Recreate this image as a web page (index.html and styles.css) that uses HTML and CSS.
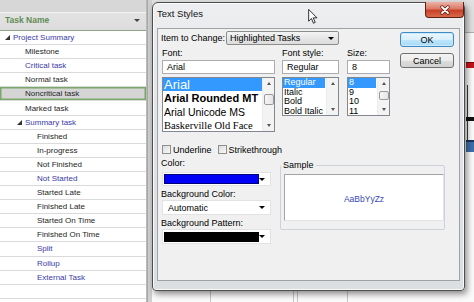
FILE: index.html
```html
<!DOCTYPE html>
<html lang="en">
<head>
<meta charset="utf-8">
<title>Text Styles</title>
<link rel="stylesheet" href="styles.css">
</head>
<body>
<div class="screen">
  <div class="table">
    <div class="th"><span class="th-name">Task Name</span><span class="th-arrow"></span></div>
    <div class="row lvl0 blue"><svg class="tri" viewBox="0 0 5 5"><polygon points="5,0 5,5 0,5"/></svg>Project Summary</div>
    <div class="row lvl1">Milestone</div>
    <div class="row lvl1 blue">Critical task</div>
    <div class="row lvl1">Normal task</div>
    <div class="row lvl1 sel">Noncritical task</div>
    <div class="row lvl1">Marked task</div>
    <div class="row lvl1t blue"><svg class="tri" viewBox="0 0 5 5"><polygon points="5,0 5,5 0,5"/></svg>Summary task</div>
    <div class="row lvl2">Finished</div>
    <div class="row lvl2">In-progress</div>
    <div class="row lvl2">Not Finished</div>
    <div class="row lvl2 blue">Not Started</div>
    <div class="row lvl2">Started Late</div>
    <div class="row lvl2">Finished Late</div>
    <div class="row lvl2">Started On Time</div>
    <div class="row lvl2">Finished On Time</div>
    <div class="row lvl2 blue">Split</div>
    <div class="row lvl2 blue">Rollup</div>
    <div class="row lvl2 blue">External Task</div>
    <div class="row"></div>
    <div class="row"></div>
  </div>
  <div class="split"></div>
  <div class="gantt">
    <div class="g-head"></div>
    <div class="g-bar g-red"></div>
    <div class="g-link"></div>
    <div class="g-bar g-black"></div>
    <div class="g-bar g-blue"></div>
    <div class="g-grid" style="left:58px"></div>
    <div class="g-grid" style="left:141px"></div>
    <div class="g-grid" style="left:145px"></div>
    <div class="g-grid" style="left:195px"></div>
  </div>

  <div class="dialog">
    <div class="titlebar">
      <span class="title">Text Styles</span>
      <div class="close">
        <svg viewBox="0 0 12 10" width="12" height="10"><path d="M3 2 L9 8 M9 2 L3 8" stroke="#5a1a10" stroke-width="3.2" stroke-linecap="round"/><path d="M3 2 L9 8 M9 2 L3 8" stroke="#fff" stroke-width="1.8" stroke-linecap="round"/></svg>
      </div>
    </div>
    <div class="panel">
      <div class="main">
        <div class="item-row">
          <span class="lbl item-lbl">Item to Change:</span>
          <div class="dd">Highlighted Tasks<i class="arr"></i></div>
        </div>
        <div class="font-row">
          <div class="fcol c-font">
            <span class="lbl">Font:</span>
            <div class="tb">Arial</div>
            <div class="list l-font">
              <div class="items">
                <div class="it f1 hl">Arial</div>
                <div class="it f2">Arial Rounded MT</div>
                <div class="it f3">Arial Unicode MS</div>
                <div class="it f4">Baskerville Old Face</div>
              </div>
              <div class="sb">
                <div class="sa up"></div>
                <div class="thumb t-font"></div>
                <div class="sp"></div>
                <div class="sa dn"></div>
              </div>
            </div>
          </div>
          <div class="fcol c-style">
            <span class="lbl">Font style:</span>
            <div class="tb">Regular</div>
            <div class="list l-small">
              <div class="items">
                <div class="it s hl">Regular</div>
                <div class="it s">Italic</div>
                <div class="it s">Bold</div>
                <div class="it s">Bold Italic</div>
              </div>
              <div class="sb">
                <div class="sa up"></div>
                <div class="sp"></div>
                <div class="sa dn"></div>
              </div>
            </div>
          </div>
          <div class="fcol c-size">
            <span class="lbl">Size:</span>
            <div class="tb">8</div>
            <div class="list l-small">
              <div class="items">
                <div class="it s hl">8</div>
                <div class="it s">9</div>
                <div class="it s">10</div>
                <div class="it s">11</div>
              </div>
              <div class="sb">
                <div class="sa up"></div>
                <div class="thumb t-size"></div>
                <div class="sp"></div>
                <div class="sa dn"></div>
              </div>
            </div>
          </div>
        </div>
        <div class="checks">
          <span class="cb"></span><span class="cb-lbl">Underline</span>
          <span class="cb cb2"></span><span class="cb-lbl">Strikethrough</span>
        </div>
        <div class="bottom">
          <div class="bcol">
            <span class="lbl">Color:</span>
            <div class="cdd c1"><span class="sw sw-blue"></span><i class="arr"></i></div>
            <span class="lbl l2">Background Color:</span>
            <div class="cdd c2"><span class="cdd-txt">Automatic</span><i class="arr"></i></div>
            <span class="lbl l2">Background Pattern:</span>
            <div class="cdd c2"><span class="sw sw-black"></span><i class="arr"></i></div>
          </div>
          <fieldset class="sample">
            <legend>Sample</legend>
            <div class="sample-box">AaBbYyZz</div>
          </fieldset>
        </div>
      </div>
      <div class="btns">
        <div class="btn ok">OK</div>
        <div class="btn">Cancel</div>
      </div>
    </div>
  </div>

  <svg class="cursor" viewBox="0 0 12 19" width="10" height="15"><path d="M0.5 0.5 L0.5 15.5 L4 12 L6.5 18 L8.8 17 L6.3 11.2 L11 11.2 Z" fill="#fff" stroke="#000" stroke-width="1"/></svg>
</div>
</body>
</html>
```

FILE: styles.css
```css
* { box-sizing: border-box; }
html, body { margin: 0; padding: 0; }
body { width: 474px; height: 302px; overflow: hidden; background: #fff; font-family: "Liberation Sans", Arial, sans-serif; }

.screen { position: relative; width: 474px; height: 302px; display: flex; overflow: hidden; }

/* task table */
.table { width: 147px; flex: none; border-right: 1px solid #b9b9b9; background: #fff; }
.th { height: 31px; display: flex; align-items: flex-end; justify-content: space-between; padding: 0 6px 5px 5px;
  background: linear-gradient(#d7d7d7 0, #d7d7d7 12px, #f2f2f2 12px, #f2f2f2 13px, #e3e3e3 13px, #dcdcdc 30px);
  border-bottom: 1px solid #8fa68a; }
.th-name { font-size: 8.5px; font-weight: bold; color: #5f8c54; line-height: 10px; }
.th-arrow { width: 0; height: 0; border-left: 3px solid transparent; border-right: 3px solid transparent; border-top: 3px solid #444; margin-bottom: 3px; }
.row { height: 14.1px; border-bottom: 1px solid #dadada; display: flex; align-items: center; font-size: 8px; color: #1e1e1e; white-space: nowrap; }
.row.blue { color: #3a3aa6; }
.lvl0 { padding-left: 5px; }
.lvl1 { padding-left: 25px; }
.lvl1t { padding-left: 17px; }
.lvl2 { padding-left: 37px; }
.tri { width: 5px; height: 5px; margin-right: 3px; fill: #333; flex: none; }
.row.sel { background: #d5d5d5; box-shadow: inset 0 0 0 1.5px #7aa86b; }

.split { width: 5px; flex: none; background: #cfcfcf; border-left: 1px solid #a9a9a9; }

/* gantt (behind dialog) */
.gantt { flex: 1; position: relative; background: #fafafa; }
.g-head { height: 33px; background: #e0e0e0; border-bottom: 1px solid #b0b0b0; }
.g-bar { position: absolute; left: 314px; width: 10px; }
.g-red { top: 62px; height: 6px; background: #c8121b; border-top: 1px solid #7a0a0a; }
.g-black { top: 117px; height: 4px; background: #111; }
.g-blue { top: 140px; height: 12px; background: #3c6ea8; border-top: 2px solid #1a3558; }
.g-link { position: absolute; left: 315px; top: 85px; width: 1px; height: 58px; background: #3a3a3a; }
.g-grid { position: absolute; top: 240px; bottom: 0; width: 1px; background: #c6c6c6; }

/* dialog window */
.dialog { position: absolute; left: 152px; top: 2px; width: 313px; height: 289px;
  border: 1px solid #4e4e4e; border-radius: 6px 6px 4px 4px;
  background: linear-gradient(#eceef0, #e1e3e6 40%, #dcdfe2);
  padding: 0 4px 9px 4px; display: flex; flex-direction: column;
  box-shadow: 2px 3px 6px rgba(0,0,0,0.45), inset 0 0 0 1px rgba(255,255,255,0.8); }
.titlebar { height: 25px; flex: none; display: flex; align-items: flex-start; justify-content: space-between; }
.title { font-size: 9.5px; line-height: 12px; padding-top: 5px; color: #111; }
.close { width: 39px; height: 16px; margin-top: -1px; margin-right: -4px; border: 1px solid #5f1f14; border-top: none;
  border-radius: 0 0 4px 4px; display: flex; align-items: center; justify-content: center;
  background: linear-gradient(#eab3a6 0, #dc7a66 45%, #c8402a 55%, #d86a48 100%); }

.panel { flex: 1; border: 1px solid #9ea3a8; background: #f0f0f0; display: flex; font-size: 9px; color: #000; }
.main { width: 242px; flex: none; padding-left: 3px; display: flex; flex-direction: column; }
.lbl { display: block; font-size: 9px; line-height: 10px; height: 10px; white-space: nowrap; }

.item-row { margin-top: 2px; height: 14px; display: flex; align-items: center; }
.item-lbl { width: 65px; flex: none; }
.dd { width: 113px; height: 14px; border: 1px solid #8c8c8c; border-radius: 2px; background: linear-gradient(#f4f4f4, #e6e6e6 50%, #dcdcdc);
  display: flex; align-items: center; justify-content: space-between; padding: 0 4px 0 3px; font-size: 9px; }
.arr { display: block; width: 0; height: 0; border-left: 3px solid transparent; border-right: 3px solid transparent; border-top: 3px solid #000; }

.font-row { margin-top: 3px; display: flex; align-items: flex-start; }
.fcol { display: flex; flex-direction: column; }
.c-font { width: 113px; margin-left: 1px; }
.c-style { width: 57px; margin-left: 7px; }
.c-size { width: 43px; margin-left: 8px; }
.tb { margin-top: 2px; height: 14px; border: 1px solid #abadb3; background: #fff; font-size: 9px; line-height: 12px; padding-left: 4px; }
.list { margin-top: 3px; border: 1px solid #828790; background: #fff; display: flex; overflow: hidden; }
.l-font { height: 55px; }
.l-small { height: 39px; }
.items { flex: 1; overflow: hidden; }
.it { white-space: nowrap; padding-left: 1px; color: #000; }
.it.hl { background: #3399ff; color: #fff; }
.f1 { height: 13px; font-size: 13px; line-height: 13px; }
.f2 { height: 14px; font-size: 11px; line-height: 14px; font-weight: bold; }
.f3 { height: 14px; font-size: 10.5px; line-height: 14px; }
.f4 { height: 14px; font-size: 10.5px; line-height: 14px; font-family: "Liberation Serif", serif; }
.it.s { height: 9.6px; font-size: 9px; line-height: 9.6px; }
.l-small .items .hl { margin-right: 1px; }
.sb { width: 12px; flex: none; background: #f3f3f3; border-left: 1px solid #ececec; display: flex; flex-direction: column; align-items: center; }
.sa { height: 11px; width: 12px; flex: none; display: flex; align-items: center; justify-content: center; }
.sa::after { content: ""; width: 0; height: 0; border-left: 2.5px solid transparent; border-right: 2.5px solid transparent; }
.sa.up::after { border-bottom: 3px solid #555; }
.sa.dn::after { border-top: 3px solid #555; }
.sp { flex: 1; }
.thumb { width: 10px; flex: none; border: 1px solid #9a9a9a; border-radius: 2px; background: linear-gradient(90deg, #f6f6f6, #e4e4e4); }
.t-font { margin-top: 5px; height: 11px; }
.t-size { margin-top: 2px; height: 9px; }

.checks { margin-top: 13px; height: 9px; display: flex; align-items: center; padding-left: 1px; }
.cb { width: 9px; height: 9px; flex: none; border: 1px solid #8e8f8f; background: linear-gradient(135deg, #dcdcdc, #f8f8f8); }
.cb-lbl { margin-left: 2px; font-size: 9px; line-height: 10px; }
.cb2 { margin-left: 6px; }

.bottom { margin-top: 4px; display: flex; align-items: flex-start; }
.bcol { width: 113px; margin-left: 1px; display: flex; flex-direction: column; }
.bcol .lbl { margin-left: -1px; }
.l2 { margin-top: 3px; }
.cdd { margin-top: 1px; height: 15px; background: #fff; border: 1px solid #e2e2e2; display: flex; align-items: center; justify-content: space-between; padding: 0 5px 0 1px; }
.c1 { margin-top: 4px; height: 14px; }
.sw { width: 95px; height: 10px; }
.sw-blue { background: #0000f6; border: 1px solid #00007a; }
.sw-black { background: #000; }
.cdd-txt { font-size: 9px; padding-left: 4px; }

.sample { margin: 2px 0 0 9px; padding: 0 0 8px 0; width: 173px; border: 1px solid #ccd3d8; border-radius: 2px; }
.sample legend { padding: 0 2px; font-size: 9px; line-height: 10px; height: 10px; }
.sample-box { margin: 4px 0 0 3px; width: 160px; height: 47px; background: #fff;
  border: 1px solid; border-color: #a3a3a3 #e4e4e4 #e4e4e4 #a3a3a3;
  display: flex; align-items: center; justify-content: center; padding-top: 3px;
  font-size: 8.5px; color: #3848b4; }

.btns { margin-top: 3px; margin-left: 0; display: flex; flex-direction: column; gap: 6px; }
.btn { width: 54px; height: 15px; border: 1px solid #707070; border-radius: 3px; font-size: 9px;
  display: flex; align-items: center; justify-content: center;
  background: linear-gradient(#f4f4f4 0, #ececec 50%, #dddddd 51%, #d2d2d2 100%); }
.btn.ok { border-color: #3c8bc4; background: linear-gradient(#eaf6fd 0, #d9f0fc 50%, #bee6fd 51%, #a9daf4 100%); box-shadow: inset 0 0 0 1px #cdeafc; }

.cursor { position: absolute; left: 308px; top: 9px; }
```
